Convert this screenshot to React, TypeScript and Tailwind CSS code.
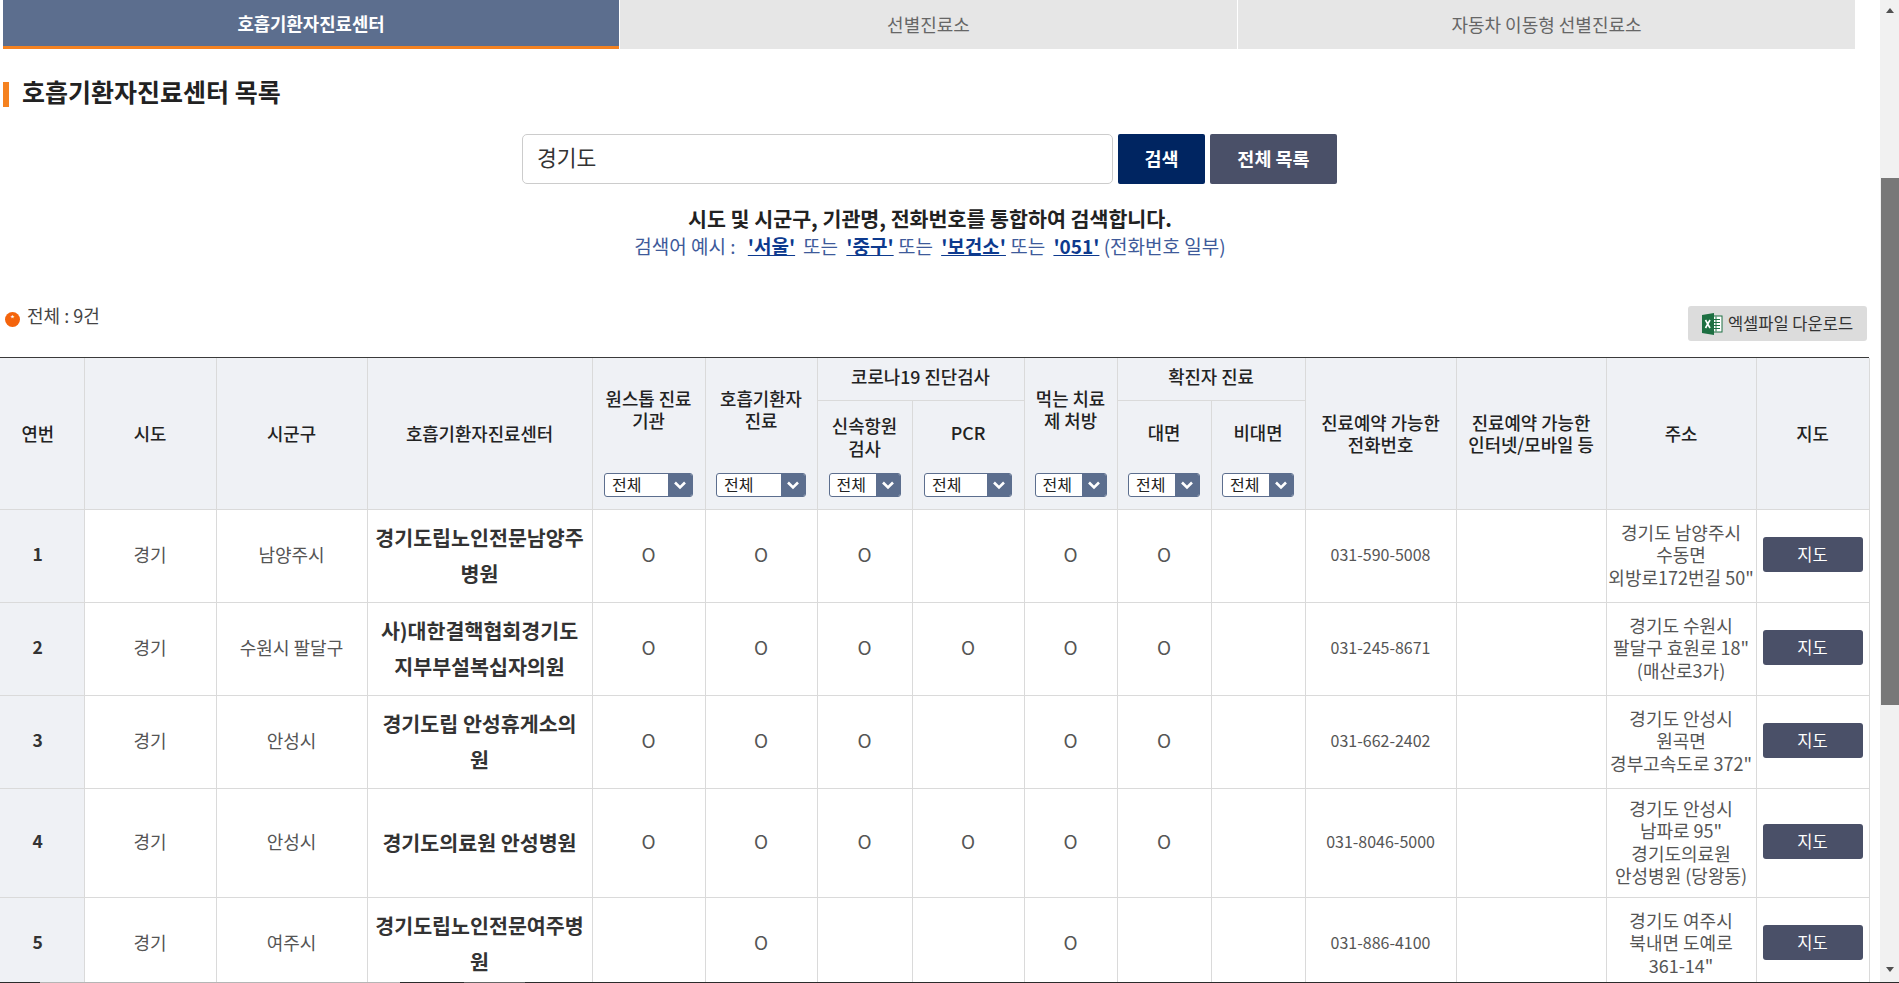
const FONT = "font-['Noto_Sans_CJK_KR','Noto_Sans',sans-serif]";

const TABS = [
  { label: "호흡기환자진료센터", active: true, width: "w-[616px]" },
  { label: "선별진료소", active: false, width: "w-[618px]" },
  { label: "자동차 이동형 선별진료소", active: false, width: "w-[618px]" },
];

type Row = {
  no: number;
  city: string;
  name: string;
  marks: boolean[];
  phone: string;
  address: string[];
};

const ROWS: Row[] = [
  {
    no: 1,
    city: "남양주시",
    name: "경기도립노인전문남양주병원",
    marks: [true, true, true, false, true, true, false],
    phone: "031-590-5008",
    address: ["경기도 남양주시", "수동면", '외방로172번길 50"'],
  },
  {
    no: 2,
    city: "수원시 팔달구",
    name: "사)대한결핵협회경기도지부부설복십자의원",
    marks: [true, true, true, true, true, true, false],
    phone: "031-245-8671",
    address: ["경기도 수원시", '팔달구 효원로 18"', "(매산로3가)"],
  },
  {
    no: 3,
    city: "안성시",
    name: "경기도립 안성휴게소의원",
    marks: [true, true, true, false, true, true, false],
    phone: "031-662-2402",
    address: ["경기도 안성시", "원곡면", '경부고속도로 372"'],
  },
  {
    no: 4,
    city: "안성시",
    name: "경기도의료원 안성병원",
    marks: [true, true, true, true, true, true, false],
    phone: "031-8046-5000",
    address: ["경기도 안성시", '남파로 95"', "경기도의료원", "안성병원 (당왕동)"],
  },
  {
    no: 5,
    city: "여주시",
    name: "경기도립노인전문여주병원",
    marks: [false, true, false, false, true, false, false],
    phone: "031-886-4100",
    address: ["경기도 여주시", "북내면 도예로", '361-14"'],
  },
];

function FilterSelect({ width }: { width: string }) {
  return (
    <div className={`mx-auto flex h-6 ${width} rounded-[3px] border border-[#5c6e8e] bg-white`}>
      <span className="flex-1 pl-[7px] text-left text-[16px] font-normal leading-[20px] text-[#222]">전체</span>
      <span className="flex w-[24px] items-center justify-center rounded-r-[2px] bg-[#5c6e8e]">
        <svg width="14" height="10" viewBox="0 0 14 10" fill="none">
          <path d="M2 2.5l5 5 5-5" stroke="#fff" strokeWidth="2.6" />
        </svg>
      </span>
    </div>
  );
}

function HeaderCell({
  children,
  select,
  colSpan,
  rowSpan,
  first,
}: {
  children: React.ReactNode;
  select?: string;
  colSpan?: number;
  rowSpan?: number;
  first?: boolean;
}) {
  return (
    <th
      colSpan={colSpan}
      rowSpan={rowSpan}
      className={`relative border border-t-0 border-[#dadada] align-middle text-[17.8px] font-medium leading-[22.4px] text-[#222] ${
        first ? "border-l-0 pl-0 pr-[8px]" : "px-1"
      }`}
    >
      {children}
      {select && (
        <div className="absolute bottom-3 left-0 right-0">
          <FilterSelect width={select} />
        </div>
      )}
    </th>
  );
}

function ExcelIcon() {
  return (
    <svg width="21" height="22" viewBox="0 0 21 22">
      <rect x="7" y="3" width="13" height="16" fill="#fff" stroke="#1d6f42" />
      <path d="M10 6.5h8M10 9.5h8M10 12.5h8M10 15.5h8M14 3.5v15" stroke="#1d6f42" />
      <path d="M0 2l12-2v22L0 20z" fill="#1d6f42" />
      <path d="M3.5 7l4.5 8M8 7l-4.5 8" stroke="#fff" strokeWidth="1.6" />
    </svg>
  );
}

export default function App() {
  return (
    <div className={`relative flex h-[983px] w-[1899px] overflow-hidden bg-white ${FONT}`}>
      <main className="w-[1880px] shrink-0">
        <nav className="flex h-[49px] pl-[3px]">
          {TABS.map((tab) => (
            <div
              key={tab.label}
              className={
                tab.active
                  ? `flex ${tab.width} items-center justify-center border-b-[3px] border-[#f58220] bg-[#5c6e8e] text-[17.8px] font-bold text-white`
                  : `flex ${tab.width} items-center justify-center border-l border-white bg-[#e6e6e6] text-[18px] text-[#666]`
              }
            >
              {tab.label}
            </div>
          ))}
        </nav>

        <h2 className="ml-[3px] mt-[33px] h-[25px] border-l-[6px] border-[#f58220] pl-[13px] text-[25px] font-bold leading-[18px] text-[#222]">
          호흡기환자진료센터 목록
        </h2>

        <div className="ml-[522px] mt-[27px] flex gap-[5px]">
          <input
            readOnly
            value="경기도"
            className="h-[50px] w-[591px] rounded-[5px] border border-[#ccc] px-[14px] pb-[5px] text-[21.5px] text-[#333]"
          />
          <button className="h-[50px] w-[87px] rounded-[2px] bg-[#002561] text-[18.5px] font-bold text-white">
            검색
          </button>
          <button className="h-[50px] w-[127px] rounded-[2px] bg-[#4a5068] text-[18.5px] font-bold text-white">
            전체 목록
          </button>
        </div>

        <div className="mt-[21px] pr-[20px] text-center leading-[27px]">
          <p className="text-[20.6px] font-bold text-[#222]">시도 및 시군구, 기관명, 전화번호를 통합하여 검색합니다.</p>
          <p className="text-[19px] text-[#3e5a9a]">
            검색어 예시 :{" "}
            <b className="ml-2 text-[#0d3a8e] underline">'서울'</b>
            <span className="ml-2">또는</span>{" "}
            <b className="ml-1 text-[#0d3a8e] underline">'중구'</b> 또는{" "}
            <b className="ml-1 text-[#0d3a8e] underline">'보건소'</b> 또는{" "}
            <b className="ml-1 text-[#0d3a8e] underline">'051'</b> (전화번호 일부)
          </p>
        </div>

        <div className="mt-[40px] flex h-[58px] items-start justify-between pl-[5px] pr-[13px]">
          <div className="mt-[3px] flex items-center gap-[7px] text-[18px] text-[#444]">
            <span className="mt-[7px] flex h-[15px] w-[15px] items-center justify-center rounded-full bg-[#f4640c] text-[10px] leading-none text-white">
              *
            </span>
            전체 : 9건
          </div>
          <button className="mt-[7px] flex h-[35px] w-[179px] items-center justify-center gap-[5px] rounded-[3px] bg-[#dcdcdc] text-[16.5px] text-[#333]">
            <ExcelIcon />
            엑셀파일 다운로드
          </button>
        </div>

        <div className="w-[1869px] border-t border-[#3a3a3a]">
          <table className="w-[1869px] table-fixed border-collapse">
            <colgroup>
              <col className="w-[84px]" />
              <col className="w-[132px]" />
              <col className="w-[151px]" />
              <col className="w-[225px]" />
              <col className="w-[113px]" />
              <col className="w-[112px]" />
              <col className="w-[95px]" />
              <col className="w-[112px]" />
              <col className="w-[93px]" />
              <col className="w-[94px]" />
              <col className="w-[94px]" />
              <col className="w-[151px]" />
              <col className="w-[150px]" />
              <col className="w-[150px]" />
              <col className="w-[113px]" />
            </colgroup>
            <thead className="bg-[#eff1f5]">
              <tr className="h-[42px]">
                <HeaderCell rowSpan={2} first>
                  연번
                </HeaderCell>
                <HeaderCell rowSpan={2}>시도</HeaderCell>
                <HeaderCell rowSpan={2}>시군구</HeaderCell>
                <HeaderCell rowSpan={2}>호흡기환자진료센터</HeaderCell>
                <HeaderCell rowSpan={2} select="w-[89px]">
                  <div className="-mt-[11px] pb-[37px]">원스톱 진료 기관</div>
                </HeaderCell>
                <HeaderCell rowSpan={2} select="w-[90px]">
                  <div className="-mt-[11px] pb-[37px]">
                    호흡기환자
                    <br />
                    진료
                  </div>
                </HeaderCell>
                <HeaderCell colSpan={2}>
                  <div className="pb-[5px]">코로나19 진단검사</div>
                </HeaderCell>
                <HeaderCell rowSpan={2} select="w-[72px]">
                  <div className="-mt-[11px] pb-[37px]">먹는 치료제 처방</div>
                </HeaderCell>
                <HeaderCell colSpan={2}>
                  <div className="pb-[5px]">확진자 진료</div>
                </HeaderCell>
                <HeaderCell rowSpan={2}>
                  진료예약 가능한
                  <br />
                  전화번호
                </HeaderCell>
                <HeaderCell rowSpan={2}>
                  진료예약 가능한
                  <br />
                  인터넷/모바일 등
                </HeaderCell>
                <HeaderCell rowSpan={2}>주소</HeaderCell>
                <HeaderCell rowSpan={2}>지도</HeaderCell>
              </tr>
              <tr className="h-[109px]">
                <HeaderCell select="w-[72px]">
                  <div className="pb-[36px]">
                    신속항원
                    <br />
                    검사
                  </div>
                </HeaderCell>
                <HeaderCell select="w-[88px]">
                  <div className="pb-[44px]">PCR</div>
                </HeaderCell>
                <HeaderCell select="w-[72px]">
                  <div className="pb-[44px]">대면</div>
                </HeaderCell>
                <HeaderCell select="w-[72px]">
                  <div className="pb-[44px]">비대면</div>
                </HeaderCell>
              </tr>
            </thead>
            <tbody className="text-center text-[18px] leading-[22.4px] text-[#555] [&_td]:pb-[2px]">
              {ROWS.map((row) => (
                <tr key={row.no} className={row.address.length > 3 ? "h-[109px]" : "h-[93px]"}>
                  <td className="border border-l-0 border-[#dadada] bg-[#eff1f5] pr-[8px] text-[17.5px] font-bold text-[#333]">
                    {row.no}
                  </td>
                  <td className="border border-[#dadada]">경기</td>
                  <td className="border border-[#dadada]">{row.city}</td>
                  <td className="border border-[#dadada] px-[7px] text-[20.6px] font-bold leading-[36px] text-[#333] [word-break:break-all]">
                    {row.name}
                  </td>
                  {row.marks.map((mark, i) => (
                    <td key={i} className="border border-[#dadada] text-[19px]">
                      {mark ? "O" : ""}
                    </td>
                  ))}
                  <td className="border border-[#dadada] text-[16px]">{row.phone}</td>
                  <td className="border border-[#dadada]" />
                  <td className="border border-[#dadada]">
                    {row.address.map((line) => (
                      <div key={line} className="whitespace-nowrap">
                        {line}
                      </div>
                    ))}
                  </td>
                  <td className="border border-[#dadada]">
                    <button className="mx-auto block h-[35px] w-[100px] rounded-[3px] bg-[#4a5068] text-[16.5px] text-white">
                      지도
                    </button>
                  </td>
                </tr>
              ))}
            </tbody>
          </table>
        </div>
      </main>

      <aside className="flex w-[19px] shrink-0 flex-col items-center bg-[#f1f1f1]">
        <span className="mt-[8px] h-0 w-0 border-x-[4px] border-b-[5px] border-x-transparent border-b-[#505050]" />
        <span className="mt-[165px] h-[527px] w-[18px] bg-[#787878]" />
        <span className="mt-[262px] h-0 w-0 border-x-[4px] border-t-[5px] border-x-transparent border-t-[#505050]" />
      </aside>

      {/* thin strip along the bottom edge of the capture */}
      <div className="absolute bottom-0 left-0 flex h-[1px] w-full bg-[#2b2b2b]">
        <span className="ml-[40px] w-[360px] bg-[#b5b5b5]" />
        <span className="ml-[64px] w-[61px] bg-[#666]" />
      </div>
    </div>
  );
}
